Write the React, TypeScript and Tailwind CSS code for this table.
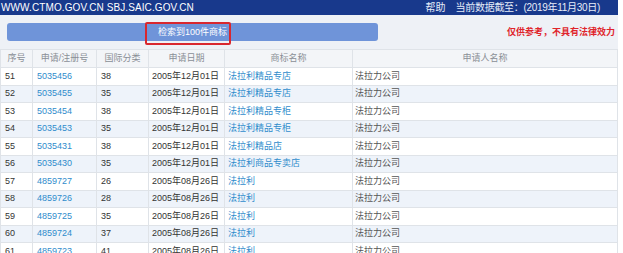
const rows = [
  { no: 51, reg: '5035456', cls: '38', date: '2005年12月01日', mark: '法拉利精品专店' },
  { no: 52, reg: '5035455', cls: '35', date: '2005年12月01日', mark: '法拉利精品专店' },
  { no: 53, reg: '5035454', cls: '38', date: '2005年12月01日', mark: '法拉利精品专柜' },
  { no: 54, reg: '5035453', cls: '35', date: '2005年12月01日', mark: '法拉利精品专柜' },
  { no: 55, reg: '5035431', cls: '38', date: '2005年12月01日', mark: '法拉利精品店' },
  { no: 56, reg: '5035430', cls: '35', date: '2005年12月01日', mark: '法拉利商品专卖店' },
  { no: 57, reg: '4859727', cls: '26', date: '2005年08月26日', mark: '法拉利' },
  { no: 58, reg: '4859726', cls: '28', date: '2005年08月26日', mark: '法拉利' },
  { no: 59, reg: '4859725', cls: '35', date: '2005年08月26日', mark: '法拉利' },
  { no: 60, reg: '4859724', cls: '37', date: '2005年08月26日', mark: '法拉利' },
  { no: 61, reg: '4859723', cls: '41', date: '2005年08月26日', mark: '法拉利' },
]

const headers = ['序号', '申请/注册号', '国际分类', '申请日期', '商标名称', '申请人名称']
const widths = ['w-[32px]', 'w-[64px]', 'w-[52px]', 'w-[76px]', 'w-[128px]', '']

export default function App() {
  return (
    <div className="w-[623px] h-[253px] overflow-hidden bg-white font-['Liberation_Sans','Noto_Sans_CJK_SC',sans-serif]">
      <div className="w-[618px]">
        {/* Top bar */}
        <div className="h-[15px] bg-[#18398c] flex items-center justify-between text-white text-[10px] leading-none">
          <span className="pl-[1px] tracking-[0.1px]">WWW.CTMO.GOV.CN SBJ.SAIC.GOV.CN</span>
          <span className="flex gap-[10px] pr-[18px] text-[#e6ecf8]">
            <span>帮助</span>
            <span className="tracking-[-0.3px]">当前数据截至：(2019年11月30日)</span>
          </span>
        </div>

        {/* Result bar */}
        <div className="h-[34px] bg-[#eef1f6] flex items-center pl-[7px] pr-[3px]">
          <div className="relative w-[371px] h-[18px] rounded-[3px] bg-[#6f94d9] flex items-center justify-center">
            <span className="text-white text-[9px] leading-none">检索到100件商标</span>
            <div className="absolute left-[138px] top-[-1px] w-[86px] h-[23px] border-2 border-[#d9272e] rounded-[2px]" />
          </div>
          <span className="ml-auto text-[9px] font-bold text-[#e0242b] leading-none">仅供参考，不具有法律效力</span>
        </div>

        {/* Table */}
        <table className="w-full border-collapse table-fixed text-[9px] leading-none">
          <thead>
            <tr className="h-[18px] bg-[#f3f5f8]">
              {headers.map((h, i) => (
                <th key={h} className={`${widths[i]} border border-[#dfe3e8] text-[#8a8f96] font-normal text-center`}>
                  {h}
                </th>
              ))}
            </tr>
          </thead>
          <tbody>
            {rows.map((r, i) => (
              <tr key={r.no} className={`h-[17.5px] ${i % 2 ? 'bg-[#eef3fa]' : 'bg-white'}`}>
                <td className="border border-[#dfe3e8] pl-[4px] text-[#333]">{r.no}</td>
                <td className="border border-[#dfe3e8] pl-[4px] text-[#2f8ccc]">{r.reg}</td>
                <td className="border border-[#dfe3e8] pl-[4px] text-[#333]">{r.cls}</td>
                <td className="border border-[#dfe3e8] pl-[3px] text-[#333] whitespace-nowrap">{r.date}</td>
                <td className="border border-[#dfe3e8] pl-[3px] text-[#2f8ccc]">{r.mark}</td>
                <td className="border border-[#dfe3e8] pl-[2px] text-[#555]">法拉力公司</td>
              </tr>
            ))}
          </tbody>
        </table>
      </div>
    </div>
  )
}
